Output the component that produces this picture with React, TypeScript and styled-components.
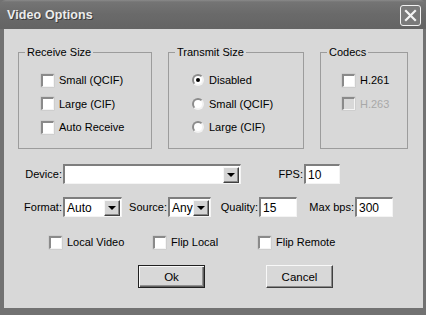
import styled, { createGlobalStyle } from "styled-components";

const GlobalStyle = createGlobalStyle`
  html, body {
    margin: 0;
    padding: 0;
    background: #ffffff;
  }
  body {
    font-family: "Liberation Sans", Arial, sans-serif;
    font-size: 11px;
    color: #000;
  }
`;

const Window = styled.div`
  width: 426px;
  height: 315px;
  display: flex;
  flex-direction: column;
  background: #727272;
  box-sizing: border-box;
  overflow: hidden;
`;

const TitleBar = styled.div`
  height: 29px;
  flex: none;
  display: flex;
  align-items: center;
  justify-content: space-between;
  padding: 0 5px 0 7px;
  box-sizing: border-box;
  background: linear-gradient(#8a8a8a 0px, #747474 2px, #6a6a6a 14px, #646464 29px);
  border-radius: 6px 6px 0 0;
`;

const Title = styled.span`
  font-size: 12.5px;
  font-weight: bold;
  color: #ececec;
  text-shadow: 1px 1px 0 #3a3a3a;
  letter-spacing: 0.1px;
  margin-top: 1px;
`;

const CloseButton = styled.div`
  width: 21px;
  height: 21px;
  box-sizing: border-box;
  border: 1px solid #f2f2f2;
  border-radius: 3px;
  background: #7a7a7a;
  display: flex;
  align-items: center;
  justify-content: center;
  margin-top: 2px;
`;

const Body = styled.div`
  flex: 1;
  background: #d8d8d8;
  margin: 0 3px 7px 4px;
  display: flex;
  flex-direction: column;
`;

const GroupRow = styled.div`
  display: flex;
  gap: 16px;
  margin: 17px 0 0 14px;
`;

const Group = styled.fieldset<{ $w: number }>`
  width: ${(p) => p.$w}px;
  box-sizing: border-box;
  margin: 0;
  padding: 0;
  border: 1px solid #9c9c9c;
`;

const Legend = styled.legend`
  padding: 0 2px;
  margin-left: 6px;
  line-height: 13px;
  font-size: 11px;
  text-align: left;
`;

const GroupItems = styled.div<{ $pad: number }>`
  display: flex;
  flex-direction: column;
  gap: 7.5px;
  padding: 13px 0 13px ${(p) => p.$pad}px;
`;

const OptionRow = styled.label<{ $disabled?: boolean }>`
  display: flex;
  align-items: center;
  gap: 5px;
  height: 16px;
  color: ${(p) => (p.$disabled ? "#a8a8a8" : "#000")};
  white-space: nowrap;
`;

const CheckBox = styled.span<{ $disabled?: boolean }>`
  width: 13px;
  height: 13px;
  box-sizing: border-box;
  flex: none;
  background: ${(p) => (p.$disabled ? "#d8d8d8" : "#ffffff")};
  border-top: 2px solid #8a8a8a;
  border-left: 2px solid #8a8a8a;
  border-bottom: 1px solid #f4f4f4;
  border-right: 1px solid #f4f4f4;
  box-shadow: 0 0 0 0.5px #c4c4c4;
`;

const Radio = styled.span<{ $on?: boolean }>`
  width: 12px;
  height: 12px;
  box-sizing: border-box;
  flex: none;
  border-radius: 50%;
  background: #ffffff;
  border: 2px solid;
  border-color: #8c8c8c #f2f2f2 #f2f2f2 #8c8c8c;
  display: flex;
  align-items: center;
  justify-content: center;
  &::after {
    content: "";
    width: 4px;
    height: 4px;
    border-radius: 50%;
    background: ${(p) => (p.$on ? "#000" : "transparent")};
  }
`;

const FieldRow = styled.div<{ $top: number }>`
  display: flex;
  align-items: center;
  height: 20px;
  margin: ${(p) => p.$top}px 0 0 19px;
`;

const FieldLabel = styled.span<{ $w: number }>`
  width: ${(p) => p.$w}px;
  flex: none;
  text-align: right;
  padding-right: 1px;
  box-sizing: border-box;
  white-space: nowrap;
`;

const Sunken = styled.div<{ $w: number }>`
  width: ${(p) => p.$w}px;
  height: 20px;
  flex: none;
  box-sizing: border-box;
  background: #ffffff;
  border-top: 2px solid #7e7e7e;
  border-left: 2px solid #7e7e7e;
  border-bottom: 1px solid #f4f4f4;
  border-right: 1px solid #f4f4f4;
  display: flex;
  align-items: center;
  justify-content: space-between;
  padding-left: 2px;
  font-size: 12px;
`;

const DropButton = styled.span`
  width: 16px;
  height: 16px;
  box-sizing: border-box;
  margin-right: 1px;
  background: #d4d4d4;
  border-top: 1px solid #f6f6f6;
  border-left: 1px solid #f6f6f6;
  border-right: 1px solid #404040;
  border-bottom: 1px solid #404040;
  box-shadow: inset -1px -1px 0 #888;
  display: flex;
  align-items: center;
  justify-content: center;
  &::after {
    content: "";
    border-left: 4px solid transparent;
    border-right: 4px solid transparent;
    border-top: 4px solid #000;
    margin-top: 1px;
  }
`;

const ToggleRow = styled.div`
  display: flex;
  margin: 17px 0 0 45px;
`;

const ToggleCell = styled.div<{ $w: number }>`
  width: ${(p) => p.$w}px;
`;

const ButtonRow = styled.div`
  display: flex;
  gap: 61px;
  margin: 15px 0 0 134px;
`;

const PushButton = styled.button<{ $default?: boolean }>`
  width: 67px;
  height: 23px;
  box-sizing: border-box;
  font-family: "Liberation Sans", Arial, sans-serif;
  font-size: 11.5px;
  color: #000;
  background: #d8d8d8;
  padding: 0;
  border: 1px solid;
  border-color: ${(p) =>
    p.$default ? "#202020" : "#f8f8f8 #404040 #404040 #f8f8f8"};
  box-shadow: ${(p) =>
    p.$default
      ? "inset 1px 1px 0 #f8f8f8, inset -1px -1px 0 #606060, inset -2px -2px 0 #909090"
      : "inset -1px -1px 0 #8a8a8a"};
`;

const Check = ({ label, disabled }: { label: string; disabled?: boolean }) => (
  <OptionRow $disabled={disabled}>
    <CheckBox $disabled={disabled} />
    {label}
  </OptionRow>
);

const Option = ({ label, on }: { label: string; on?: boolean }) => (
  <OptionRow>
    <Radio $on={on} />
    {label}
  </OptionRow>
);

const Combo = ({ w, value }: { w: number; value: string }) => (
  <Sunken $w={w}>
    <span>{value}</span>
    <DropButton />
  </Sunken>
);

const App = () => {
  return (
    <>
      <GlobalStyle />
      <Window>
        <TitleBar>
          <Title>Video Options</Title>
          <CloseButton>
            <svg width="13" height="13" viewBox="0 0 13 13">
              <path
                d="M2 2 L11 11 M11 2 L2 11"
                stroke="#f4f4f4"
                strokeWidth="2.2"
                strokeLinecap="square"
              />
            </svg>
          </CloseButton>
        </TitleBar>
        <Body>
          <GroupRow>
            <Group $w={134}>
              <Legend>Receive Size</Legend>
              <GroupItems $pad={22}>
                <Check label="Small (QCIF)" />
                <Check label="Large (CIF)" />
                <Check label="Auto Receive" />
              </GroupItems>
            </Group>
            <Group $w={136}>
              <Legend>Transmit Size</Legend>
              <GroupItems $pad={23}>
                <Option label="Disabled" on />
                <Option label="Small (QCIF)" />
                <Option label="Large (CIF)" />
              </GroupItems>
            </Group>
            <Group $w={88}>
              <Legend>Codecs</Legend>
              <GroupItems $pad={21}>
                <Check label="H.261" />
                <Check label="H.263" disabled />
              </GroupItems>
            </Group>
          </GroupRow>

          <FieldRow $top={15}>
            <FieldLabel $w={40}>Device:</FieldLabel>
            <Combo w={178} value="" />
            <FieldLabel $w={63}>FPS:</FieldLabel>
            <Sunken $w={36}>10</Sunken>
          </FieldRow>

          <FieldRow $top={13}>
            <FieldLabel $w={40}>Format:</FieldLabel>
            <Combo w={59} value="Auto" />
            <FieldLabel $w={46}>Source:</FieldLabel>
            <Combo w={43} value="Any" />
            <FieldLabel $w={48}>Quality:</FieldLabel>
            <Sunken $w={38}>15</Sunken>
            <FieldLabel $w={58}>Max bps:</FieldLabel>
            <Sunken $w={38}>300</Sunken>
          </FieldRow>

          <ToggleRow>
            <ToggleCell $w={104}>
              <Check label="Local Video" />
            </ToggleCell>
            <ToggleCell $w={105}>
              <Check label="Flip Local" />
            </ToggleCell>
            <ToggleCell $w={110}>
              <Check label="Flip Remote" />
            </ToggleCell>
          </ToggleRow>

          <ButtonRow>
            <PushButton $default>Ok</PushButton>
            <PushButton>Cancel</PushButton>
          </ButtonRow>
        </Body>
      </Window>
    </>
  );
};

export default App;
